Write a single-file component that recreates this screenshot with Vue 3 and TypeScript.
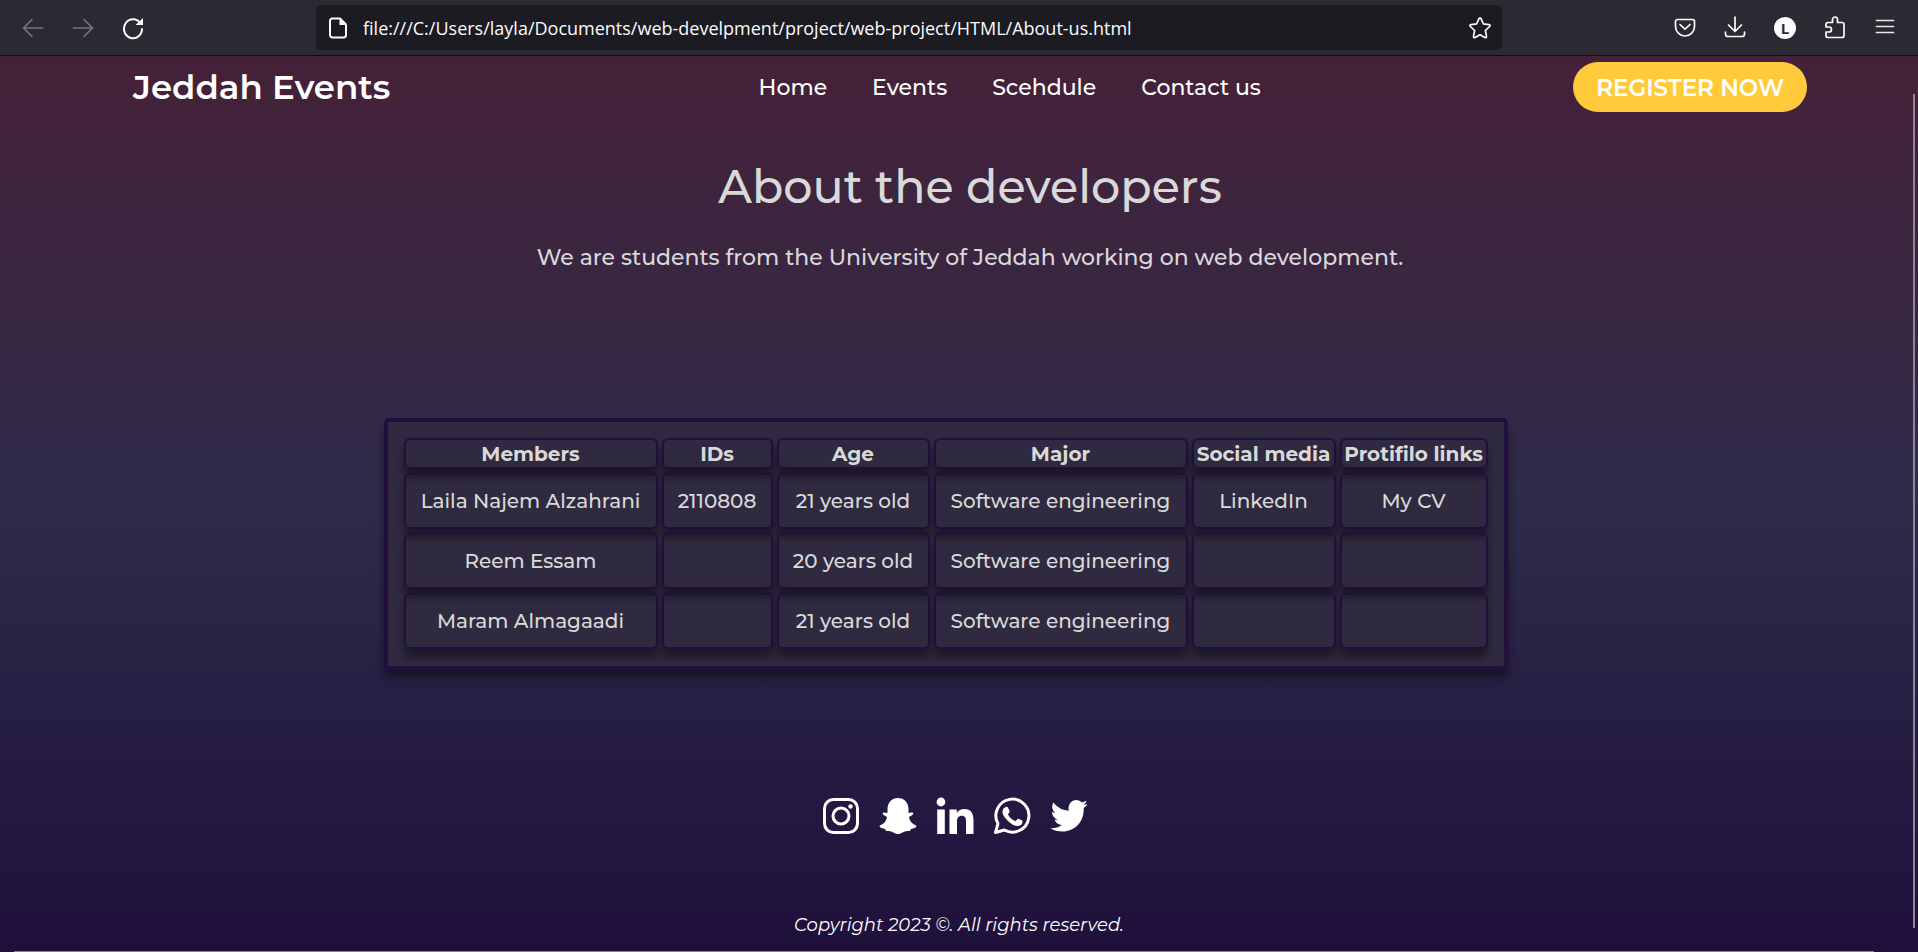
<script setup lang="ts">
interface Member {
  name: string
  id: string
  age: string
  major: string
  social: string
  cv: string
}

const navLinks: string[] = ['Home', 'Events', 'Scehdule', 'Contact us']
const columns: string[] = ['Members', 'IDs', 'Age', 'Major', 'Social media', 'Protifilo links']
const members: Member[] = [
  { name: 'Laila Najem Alzahrani', id: '2110808', age: '21 years old', major: 'Software engineering', social: 'LinkedIn', cv: 'My CV' },
  { name: 'Reem Essam', id: '', age: '20 years old', major: 'Software engineering', social: '', cv: '' },
  { name: 'Maram Almagaadi', id: '', age: '21 years old', major: 'Software engineering', social: '', cv: '' },
]
const address = 'file:///C:/Users/layla/Documents/web-develpment/project/web-project/HTML/About-us.html'
</script>

<template>
  <div class="window">
    <div class="toolbar">
      <div class="controls">
        <button class="tool dim" type="button" aria-label="Back">
          <svg viewBox="0 0 24 24"><path d="M21.500 12H3M11 3.500L2.500 12L11 20.500" /></svg>
        </button>
        <button class="tool dim" type="button" aria-label="Forward">
          <svg viewBox="0 0 24 24"><path d="M2.500 12H21M13 3.500L21.500 12L13 20.500" /></svg>
        </button>
        <button class="tool reload" type="button" aria-label="Reload">
          <svg viewBox="0 0 24 24"><path d="M19.500 7.500A9 9.500 0 1 0 21 13" /><path class="solid" d="M22 2V9H14.500Z" /></svg>
        </button>
      </div>
      <div class="address">
        <svg class="page-icon" viewBox="0 0 24 24"><path d="M6 2.500H14L20 8.500V19A2.500 2.500 0 0 1 17.500 21.500H6.500A2.500 2.500 0 0 1 4 19V5A2.500 2.500 0 0 1 6 2.500Z" /><path class="solid" d="M13.500 2.500V9H20Z" /></svg>
        <input :value="address" type="text" aria-label="Address" />
        <button class="tool" type="button" aria-label="Bookmark">
          <svg viewBox="0 0 24 24"><path d="M11 2.600Q12 1 13 2.600L15.400 7.900L21 8.600Q22.800 9 21.600 10.500L17.400 14.500L18.500 20.300Q18.500 22.200 16.800 21.500L12 18.700L7.200 21.500Q5.500 22.200 5.500 20.300L6.600 14.500L2.400 10.500Q1.200 9 3 8.600L8.600 7.900Z" /></svg>
        </button>
      </div>
      <div class="extras">
        <button class="tool" type="button" aria-label="Save to Pocket">
          <svg viewBox="0 0 24 24"><path d="M4.500 3.500H19.500A2 2 0 0 1 21.500 5.500V10.500A9.500 9.500 0 0 1 2.500 10.500V5.500A2 2 0 0 1 4.500 3.500ZM7 8.500L12 13.200L17 8.500" /></svg>
        </button>
        <button class="tool" type="button" aria-label="Downloads">
          <svg viewBox="0 0 24 24"><path d="M12 1V15M5.500 9L12 15.500L18.500 9M2.500 16V18A2.500 2.500 0 0 0 5 20.500H19A2.500 2.500 0 0 0 21.500 18V16" /></svg>
        </button>
        <button class="tool account" type="button" aria-label="Account"><span>L</span></button>
        <button class="tool" type="button" aria-label="Extensions">
          <svg viewBox="0 0 24 24"><path d="M9.500 6V3.500A2.500 2.500 0 0 1 14.500 3.500V6.500H19A2 2 0 0 1 21 8.500V19.500A2 2 0 0 1 19 21.500H5A2 2 0 0 1 3 19.500V16H6A2.500 2.500 0 0 0 6 11H3V8.500A2 2 0 0 1 5 6.500H9.500Z" /></svg>
        </button>
        <button class="tool menu" type="button" aria-label="Menu">
          <svg viewBox="0 0 24 24"><path d="M3.500 4.500H20.500M3.500 10.500H20.500M3.500 16.500H20.500" /></svg>
        </button>
      </div>
    </div>

    <div class="page">
      <header>
        <a class="logo" href="#">Jeddah Events</a>
        <nav>
          <a v-for="link in navLinks" :key="link" href="#">{{ link }}</a>
        </nav>
        <button class="register" type="button">REGISTER NOW</button>
      </header>

      <section class="intro">
        <h1>About the developers</h1>
        <p>We are students from the University of Jeddah working on web development.</p>
      </section>

      <section class="team">
        <table>
          <colgroup>
            <col class="c-name" /><col class="c-id" /><col class="c-age" /><col class="c-major" /><col class="c-social" /><col class="c-cv" />
          </colgroup>
          <thead>
            <tr><th v-for="column in columns" :key="column" scope="col">{{ column }}</th></tr>
          </thead>
          <tbody>
            <tr v-for="member in members" :key="member.name">
              <td>{{ member.name }}</td>
              <td>{{ member.id }}</td>
              <td>{{ member.age }}</td>
              <td>{{ member.major }}</td>
              <td><a v-if="member.social" href="#">{{ member.social }}</a></td>
              <td><a v-if="member.cv" href="#">{{ member.cv }}</a></td>
            </tr>
          </tbody>
        </table>
      </section>

      <footer>
        <div class="social">
          <a href="#" aria-label="Instagram">
            <svg viewBox="0 0 38 38"><rect x="2.500" y="2.500" width="33" height="33" rx="9" /><circle cx="19" cy="19" r="8" /><circle class="solid" cx="28.500" cy="9.500" r="2.200" /></svg>
          </a>
          <a href="#" aria-label="Snapchat">
            <svg viewBox="0 0 38 38"><path class="solid" d="M19 1C25 1 29.500 5.500 29.500 12V16C31 16 33 14.800 34.200 16C35 18 31.500 19 30 20C30.500 24 33 27 37 28.500C38.500 30 35 31.500 32 32C31.500 33.500 31 34.300 29 34C25 33.500 23 37 19 37C15 37 13 33.500 9 34C7 34.300 6.500 33.500 6 32C3 31.500 -0.500 30 1 28.500C5 27 7.500 24 8 20C6.500 19 3 18 3.800 16C5 14.800 7 16 8.500 16V12C8.500 5.500 13 1 19 1Z" /></svg>
          </a>
          <a href="#" aria-label="LinkedIn">
            <svg viewBox="0 0 38 38"><circle class="solid" cx="5" cy="5" r="4.400" /><path class="solid" d="M1.200 12.500H8.800V37H1.200ZM13.500 12.500H20.800V16C22.200 13.500 25 12 28.500 12C35 12 37.500 16.500 37.500 23V37H30V24.500C30 21 29 18.800 26 18.800C22.500 18.800 21 21 21 24.500V37H13.500Z" /></svg>
          </a>
          <a href="#" aria-label="WhatsApp">
            <svg viewBox="0 0 38 38"><path d="M2.500 35.500L5 26.700A16.500 16.500 0 1 1 11.300 33Z" /><path class="solid" d="M12.500 10Q14.500 9.300 15.200 11L16.700 14.500Q16.800 15.500 14.900 17.500Q17.500 22.200 22.500 24.200L24.800 21.800Q25.500 21.400 29.500 23.800Q29.700 28.500 24.800 29Q20 29 14.500 23.500Q9 18 9.500 14Q10 11 12.500 10Z" /></svg>
          </a>
          <a href="#" aria-label="Twitter">
            <svg viewBox="0 0 38 38"><path class="solid" d="M37.500 7Q36 9.500 33.700 11C34.500 25 24.500 34.500 12.500 34.500Q5.500 34.500 0.500 31.300Q7 31.500 11.700 28Q6.500 27.500 4.600 22.700H8Q2.200 20.500 2 15L5.400 16Q0.200 11.500 3.200 5.500Q10 13.500 18.800 13.700C17.500 7.500 21.500 3 26.500 3Q29.700 3 32 5.500L36.500 3.700Q36 6 33.500 7.900Z" /></svg>
          </a>
        </div>
        <p class="copyright">Copyright 2023 ©. All rights reserved.</p>
      </footer>

      <div class="scroll-y"></div>
      <div class="scroll-x"></div>
    </div>
  </div>
</template>

<style>
body {
  margin: 0;
  background: #1f113c;
}
</style>

<style scoped>
* {
  box-sizing: border-box;
}
.window {
  min-height: 100vh;
  display: flex;
  flex-direction: column;
  font-family: Montserrat, Inter, "Open Sans", sans-serif;
  font-weight: 500;
}
a {
  color: inherit;
  text-decoration: none;
}
svg {
  display: block;
  fill: none;
  stroke: currentColor;
  stroke-linecap: round;
  stroke-linejoin: round;
}
svg .solid {
  fill: currentColor;
  stroke: none;
}
.toolbar {
  display: grid;
  grid-template-columns: 300px 1fr 400px;
  gap: 16px;
  height: 56px;
  align-items: center;
  background: #2b2a33;
  border-bottom: 1px solid #0f0c16;
  color: #fbfbfe;
}
.controls,
.extras {
  display: flex;
  gap: 26px;
}
.controls {
  padding-left: 21px;
}
.extras {
  justify-content: flex-end;
  padding-right: 21px;
}
.tool {
  width: 24px;
  height: 24px;
  padding: 0;
  border: 0;
  background: none;
  color: inherit;
  flex: none;
}
.tool svg {
  width: 24px;
  height: 24px;
  stroke-width: 1.7;
}
.tool.reload svg {
  stroke-width: 2;
}
.dim {
  color: #77767d;
}
.menu {
  color: #e6e6ea;
}
.account {
  display: grid;
  place-items: center;
}
.account span {
  width: 22px;
  height: 22px;
  border-radius: 50%;
  background: #fbfbfe;
  color: #2b2a33;
  font: 700 15px/22px "Open Sans", sans-serif;
}
.address {
  display: flex;
  align-items: center;
  height: 45px;
  padding: 0 10px;
  border-radius: 5px;
  background: #1c1b22;
}
.page-icon {
  width: 24px;
  height: 24px;
  flex: none;
  stroke-width: 2;
}
.address input {
  flex: 1;
  min-width: 0;
  margin: 0 13px;
  padding: 0;
  border: 0;
  background: none;
  color: #fbfbfe;
  font: 400 18px/24px "Open Sans", sans-serif;
}
.page {
  position: relative;
  flex: 1;
  background: linear-gradient(#452138, #2e2b4a 50%, #1f103b);
}
header {
  display: flex;
  justify-content: space-between;
  align-items: center;
  padding: 6px 111px 0 133px;
  color: #fff;
}
.logo {
  font-size: 34px;
  font-weight: 600;
  line-height: 50px;
}
nav {
  display: flex;
  gap: 45px;
  padding-left: 56px;
  font-size: 22px;
}
.register {
  height: 50px;
  padding: 1px 23px 0;
  border: 0;
  border-radius: 25px;
  background: #ffcb3b;
  color: #fff;
  font: 600 23px/48px Montserrat, Inter, sans-serif;
}
.intro {
  padding: 44px 0 0 22px;
  color: #d9d9d9;
  text-align: center;
}
h1 {
  margin: 0;
  font-size: 46px;
  font-weight: 500;
  line-height: 62px;
}
.intro p {
  margin: 25px 0 0;
  font-size: 22px;
  line-height: 30px;
}
.team {
  padding: 145px 27px 0 0;
}
table {
  margin: 0 auto;
  border: 4px solid #210f3d;
  border-radius: 5px;
  padding: 12px 12px 13px;
  border-spacing: 4px;
  background: #2f2a40;
  color: #d9d9d9;
  font-size: 20px;
  line-height: 24px;
  text-align: center;
  box-shadow: 0 8px 8px rgba(0, 0, 0, 0.42);
}
th,
td {
  border: 2px solid #210f3d;
  border-radius: 6px;
  box-shadow: 0 8px 8px rgba(0, 0, 0, 0.42);
  white-space: nowrap;
}
th {
  padding: 2px 0 1px;
  font-weight: 700;
}
td {
  height: 56px;
  padding: 0 0 1px;
}
.c-name,
.c-major {
  width: 254px;
}
.c-id {
  width: 111px;
}
.c-age {
  width: 153px;
}
.c-social {
  width: 144px;
}
.c-cv {
  width: 148px;
}
footer {
  padding-top: 127px;
  text-align: center;
  color: #fff;
}
.social {
  display: flex;
  justify-content: center;
  gap: 19px;
  padding-right: 8px;
}
.social svg {
  width: 38px;
  height: 38px;
  stroke-width: 3;
}
.copyright {
  margin: 77px 0 0;
  padding-bottom: 13px;
  font-size: 18px;
  font-style: italic;
  font-weight: 400;
  line-height: 26px;
}
.scroll-y {
  position: absolute;
  top: 38px;
  right: 3px;
  bottom: 24px;
  width: 2px;
  background: #8c8790;
}
.scroll-x {
  position: absolute;
  left: 14px;
  right: 44px;
  bottom: 0;
  height: 1px;
  background: #8c8194;
}
</style>
